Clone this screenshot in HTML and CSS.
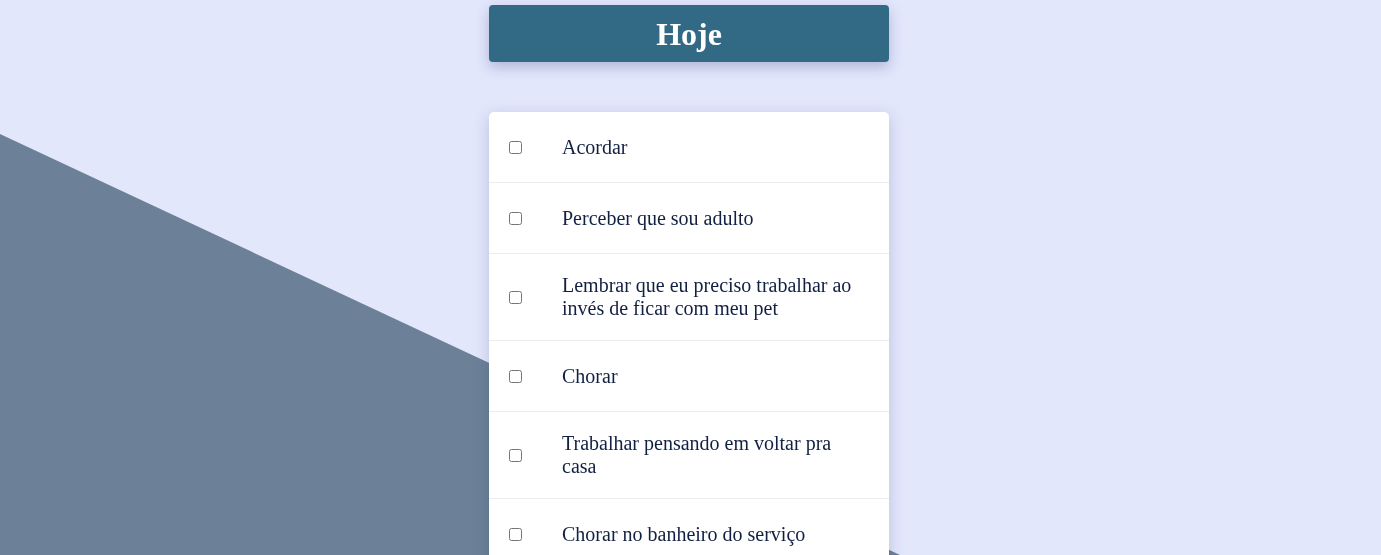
FILE: index.html
```html
<!DOCTYPE html>
<html lang="pt-BR">
<head>
<meta charset="utf-8">
<title>Hoje</title>
<link rel="stylesheet" href="styles.css">
</head>
<body>
<div class="backdrop" aria-hidden="true"></div>
<main class="app">
  <header class="title-bar">
    <h1 class="title">Hoje</h1>
  </header>
  <ul class="todo-list">
    <li class="todo"><input type="checkbox" class="todo-check"><span class="todo-text">Acordar</span></li>
    <li class="todo"><input type="checkbox" class="todo-check"><span class="todo-text">Perceber que sou adulto</span></li>
    <li class="todo"><input type="checkbox" class="todo-check"><span class="todo-text">Lembrar que eu preciso trabalhar ao invés de ficar com meu pet</span></li>
    <li class="todo"><input type="checkbox" class="todo-check"><span class="todo-text">Chorar</span></li>
    <li class="todo"><input type="checkbox" class="todo-check"><span class="todo-text">Trabalhar pensando em voltar pra casa</span></li>
    <li class="todo"><input type="checkbox" class="todo-check"><span class="todo-text">Chorar no banheiro do serviço</span></li>
  </ul>
</main>
</body>
</html>
```
FILE: styles.css
```css
* { box-sizing: border-box; }

html, body {
  margin: 0;
  padding: 0;
}

body {
  background: #e3e7fc;
  font-family: "Liberation Serif", "Times New Roman", serif;
  color: #122042;
  min-height: 555px;
  padding-right: 3px;
}

.backdrop {
  position: fixed;
  inset: 0;
  background: #6c8198;
  clip-path: polygon(0 134px, 1381px 780px, 0 780px);
  z-index: 0;
}

.app {
  position: relative;
  z-index: 1;
  width: 400px;
  margin: 0 auto;
  padding-top: 5px;
  display: flex;
  flex-direction: column;
  gap: 50px;
}

.title-bar {
  background: #326a85;
  border-radius: 4px;
  height: 57px;
  display: flex;
  align-items: center;
  justify-content: center;
  box-shadow: 0 5px 14px rgba(40, 50, 110, 0.28);
}

.title {
  margin: 0;
  color: #ffffff;
  font-size: 32px;
  font-weight: bold;
  line-height: 1;
  padding-top: 1px;
}

.todo-list {
  list-style: none;
  margin: 0;
  padding: 0;
  background: #ffffff;
  border-radius: 5px 5px 0 0;
  box-shadow: 0 4px 16px rgba(40, 50, 110, 0.22);
}

.todo {
  display: flex;
  align-items: center;
  gap: 40px;
  min-height: 71px;
  padding: 20px 25px 20px 20px;
  border-bottom: 1px solid #ececf0;
}

.todo-check {
  margin: 0;
  width: 13px;
  height: 13px;
  flex: none;
}

.todo-text {
  font-size: 20px;
  line-height: 23px;
}
```
